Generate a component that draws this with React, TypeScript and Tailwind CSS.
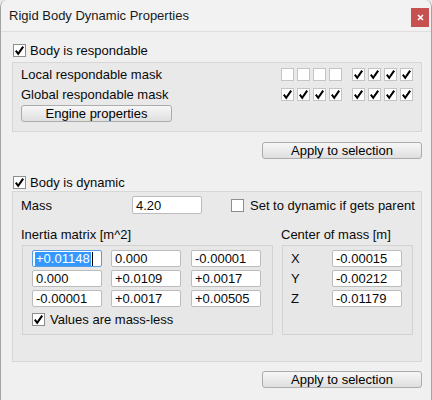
import React from "react";

const Check = ({ checked, light }: { checked?: boolean; light?: boolean }) => (
  <span
    className={
      "w-[13px] h-[13px] bg-white border flex items-center justify-center shrink-0 " +
      (light ? "border-[#c4c4c4]" : "border-[#8e8e8e]")
    }
  >
    {checked && (
      <svg width="11" height="11" viewBox="0 0 11 11">
        <path d="M1.8 5.6 L4.2 8.8 L9.2 1.6" fill="none" stroke="#000" strokeWidth="2" strokeLinejoin="miter" />
      </svg>
    )}
  </span>
);

const Btn = ({ children, className }: { children: React.ReactNode; className?: string }) => (
  <div
    className={
      "h-[17px] border border-[#acacac] rounded-[3px] bg-linear-to-b from-[#f7f7f7] to-[#dfdfdf] flex items-center justify-center leading-none text-black " +
      (className || "")
    }
  >
    {children}
  </div>
);

const Input = ({ value, className, selected }: { value: string; className?: string; selected?: boolean }) => (
  <div
    className={
      "w-[70px] h-[17px] bg-white border rounded-[2px] pl-[2px] flex items-center leading-none shrink-0 " +
      (selected ? "border-[#569de5] " : "border-[#bcbcbc] ") +
      (className || "")
    }
  >
    {selected ? (
      <>
        <span className="bg-[#3399ff] text-white h-[14px] flex items-center px-[1px]">{value}</span>
        <span className="w-[1px] h-[14px] bg-black ml-[1px]" />
      </>
    ) : (
      <span className="pl-[1px]">{value}</span>
    )}
  </div>
);

const MaskBoxes = ({ a, b }: { a: boolean; b: boolean }) => (
  <div className="flex ml-auto mr-[8px]">
    <div className="flex gap-[3px]">
      {[0, 1, 2, 3].map((i) => (
        <Check key={i} checked={a} light />
      ))}
    </div>
    <div className="flex gap-[3px] ml-[10px]">
      {[0, 1, 2, 3].map((i) => (
        <Check key={i} checked={b} light />
      ))}
    </div>
  </div>
);

export default function App() {
  const inertia = [
    ["+0.01148", "0.000", "-0.00001"],
    ["0.000", "+0.0109", "+0.0017"],
    ["-0.00001", "+0.0017", "+0.00505"],
  ];
  const com = [
    ["X", "-0.00015"],
    ["Y", "-0.00212"],
    ["Z", "-0.01179"],
  ];
  return (
    <div className="w-[432px] h-[400px] bg-[#e9e9e9] font-['Liberation_Sans',Arial,sans-serif] text-[13px] text-[#0a0a0a] overflow-hidden">
      <div className="w-[432px] h-[400px] bg-[#f0f0f0] border-x border-[#a3a3a3] rounded-t-[7px] flex flex-col">
        {/* title bar */}
        <div className="h-[32px] flex items-start border-b border-[#dedede] bg-[#f2f2f2] rounded-t-[7px]">
          <div className="pl-[8px] pt-[8px] leading-[16px] text-[#1a1a1a]">Rigid Body Dynamic Properties</div>
          <div className="ml-auto mr-[2px] mt-[8px] w-[18px] h-[19px] bg-[#c75050] flex items-center justify-center">
            <svg width="7" height="7" viewBox="0 0 7 7">
              <path d="M1 1 L6 6 M6 1 L1 6" stroke="#fff" strokeWidth="1.6" />
            </svg>
          </div>
        </div>

        {/* body is respondable */}
        <div className="mt-[12px] ml-[12px] h-[13px] flex items-center">
          <Check checked />
          <span className="ml-[4px] leading-none">Body is respondable</span>
        </div>

        <div className="mt-[5px] ml-[11px] w-[410px] h-[70px] border border-[#d7d7d7] bg-[#e9e9e9] flex flex-col pt-[5px] pl-[8px]">
          <div className="h-[13px] flex items-center">
            <span className="leading-none">Local respondable mask</span>
            <MaskBoxes a={false} b={true} />
          </div>
          <div className="h-[13px] mt-[7px] flex items-center">
            <span className="leading-none">Global respondable mask</span>
            <MaskBoxes a={true} b={true} />
          </div>
          <Btn className="w-[151px] mt-[4px]">Engine properties</Btn>
        </div>

        <div className="mt-[10px] flex">
          <Btn className="w-[160px] ml-auto mr-[9px]">Apply to selection</Btn>
        </div>

        {/* body is dynamic */}
        <div className="mt-[17px] ml-[12px] h-[13px] flex items-center">
          <Check checked />
          <span className="ml-[4px] leading-none">Body is dynamic</span>
        </div>

        <div className="mt-[2px] ml-[11px] w-[410px] h-[171px] border border-[#d7d7d7] bg-[#e9e9e9] flex flex-col pt-[4px]">
          <div className="flex items-center h-[18px] pl-[8px]">
            <span className="leading-none w-[111px]">Mass</span>
            <Input value="4.20" className="h-[18px]" />
            <span className="ml-[29px]">
              <Check />
            </span>
            <span className="ml-[6px] leading-none">Set to dynamic if gets parent</span>
          </div>
          <div className="flex mt-[13px] h-[14px] items-center">
            <span className="pl-[8px] leading-none w-[268px]">Inertia matrix [m^2]</span>
            <span className="leading-none">Center of mass [m]</span>
          </div>
          <div className="flex mt-[4px]">
            <div className="ml-[9px] w-[251px] h-[90px] border border-[#d2d2d2] bg-[#e7e7e7] flex flex-col pt-[4px] pl-[9px]">
              {inertia.map((row, r) => (
                <div key={r} className={"flex " + (r > 0 ? "mt-[3px]" : "")}>
                  <Input value={row[0]} selected={r === 0} />
                  <Input value={row[1]} className="ml-[9px]" />
                  <Input value={row[2]} className="ml-[10px]" />
                </div>
              ))}
              <div className="flex items-center h-[13px] mt-[6px]">
                <Check checked />
                <span className="ml-[5px] leading-none">Values are mass-less</span>
              </div>
            </div>
            <div className="ml-[9px] w-[131px] h-[90px] border border-[#d2d2d2] bg-[#e7e7e7] flex flex-col pt-[4px]">
              {com.map(([l, v], r) => (
                <div key={l} className={"flex items-center " + (r > 0 ? "mt-[3px]" : "")}>
                  <span className="ml-[8px] w-[41px] leading-none">{l}</span>
                  <Input value={v} />
                </div>
              ))}
            </div>
          </div>
        </div>

        <div className="mt-[9px] flex">
          <Btn className="w-[160px] ml-auto mr-[9px]">Apply to selection</Btn>
        </div>
      </div>
    </div>
  );
}
